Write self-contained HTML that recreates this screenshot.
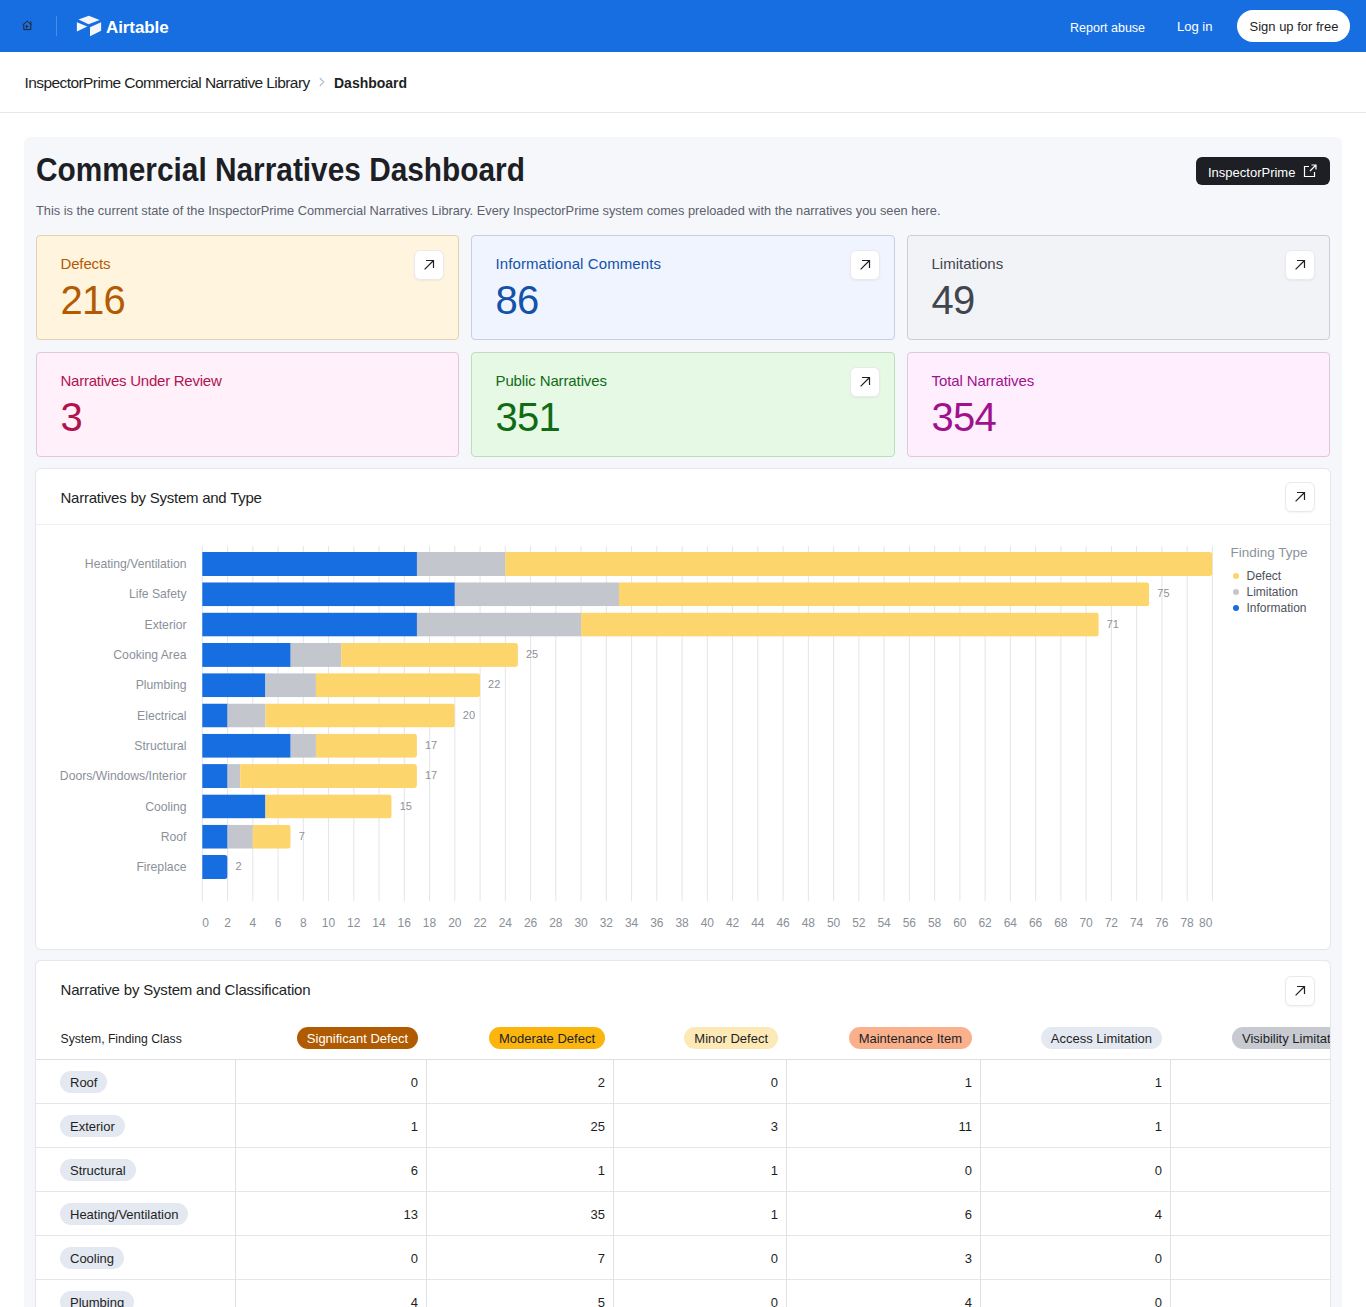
<!DOCTYPE html>
<html><head><meta charset="utf-8"><title>Commercial Narratives Dashboard</title>
<style>
html,body{margin:0;padding:0;background:#fff;overflow:hidden;width:1366px;height:1307px;font-family:'Liberation Sans', sans-serif}
.t{position:absolute;white-space:nowrap;font-family:'Liberation Sans', sans-serif}
.pill{position:absolute;height:21px;line-height:22px;padding:1px 10px 0 10px;border-radius:11px;font-size:13px;white-space:nowrap;font-family:'Liberation Sans', sans-serif}
</style></head><body>
<div style="position:absolute;left:0px;top:0px;width:1366px;height:52px;background:#176ee1"></div>
<svg style="position:absolute;left:22px;top:20px" width="11" height="11" viewBox="0 0 11 11"><path d="M0.8 4.8 L5.2 1.2 L9.6 4.8 M1.8 4.2 V9.6 H8.8 V4.2" fill="none" stroke="#2a2018" stroke-width="0.95"/><path d="M8.8 1.6 V4" stroke="#2a2018" stroke-width="1.1"/><path d="M4.4 5 V8.2 M4.4 6.6 L6.2 6.6" fill="none" stroke="#2a2018" stroke-width="1"/></svg>
<div style="position:absolute;left:56px;top:16px;width:1px;height:20px;background:rgba(255,255,255,0.22)"></div>
<svg style="position:absolute;left:70px;top:10px" width="34" height="30" viewBox="0 0 34 30"><path d="M8.5 9.6 L18.8 5.8 L29.6 10 L18.5 14.2 Z" fill="#f4f6fb"/><path d="M6.9 12.3 L17.3 16.5 L6.9 21.5 Z" fill="#f4f6fb"/><path d="M20 17.3 L31.1 12.3 L31.1 20.8 L20 26.2 Z" fill="#f4f6fb"/></svg>
<div class="t" style="left:106px;top:18.61px;font-size:17px;line-height:17px;color:#ffffff;font-weight:bold;letter-spacing:-0.1px">Airtable</div>
<div class="t" style="left:1070px;top:22.42px;font-size:12.5px;line-height:12.5px;color:#ffffff;font-weight:normal;">Report abuse</div>
<div class="t" style="left:1177px;top:19.50px;font-size:13px;line-height:13px;color:#ffffff;font-weight:normal;">Log in</div>
<div style="position:absolute;left:1237px;top:10px;width:113px;height:32px;background:#fff;border-radius:16px"></div>
<div class="t" style="left:1249.5px;top:19.50px;font-size:13px;line-height:13px;color:#1d1f25;font-weight:normal;">Sign up for free</div>
<div class="t" style="left:24.5px;top:74.88px;font-size:15.5px;line-height:15.5px;color:#1d1f25;font-weight:normal;letter-spacing:-0.58px">InspectorPrime Commercial Narrative Library</div>
<svg style="position:absolute;left:318px;top:76px" width="8" height="12" viewBox="0 0 8 12"><path d="M1.8 2 L5.8 6 L1.8 10" fill="none" stroke="#b8bcc8" stroke-width="1.1"/></svg>
<div class="t" style="left:334px;top:76.15px;font-size:14px;line-height:14px;color:#1d1f25;font-weight:bold;">Dashboard</div>
<div style="position:absolute;left:0px;top:112px;width:1366px;height:1px;background:#e6e6e8"></div>
<div style="position:absolute;left:24px;top:137px;width:1318px;height:1400px;background:#f6f7fb;border-radius:6px"></div>
<div class="t" style="left:36px;top:152.22px;font-size:34px;line-height:34px;color:#1d1f25;font-weight:bold;transform:scaleX(0.877);transform-origin:0 0">Commercial Narratives Dashboard</div>
<div class="t" style="left:36px;top:204.66px;font-size:12.8px;line-height:12.8px;color:#5c616b;font-weight:normal;">This is the current state of the InspectorPrime Commercial Narratives Library. Every InspectorPrime system comes preloaded with the narratives you seen here.</div>
<div style="position:absolute;left:1196px;top:157px;width:134px;height:28px;background:#1d1f25;border-radius:6px"></div>
<div class="t" style="left:1208px;top:166.00px;font-size:13px;line-height:13px;color:#ffffff;font-weight:normal;">InspectorPrime</div>
<svg style="position:absolute;left:1302px;top:163px" width="16" height="16" viewBox="0 0 16 16"><path d="M7 3.5 H2.5 V13.5 H12.5 V9" fill="none" stroke="#fff" stroke-width="1.2"/><path d="M8 8 L14 2 M9.5 2 H14 V6.5" fill="none" stroke="#fff" stroke-width="1.2"/></svg>
<div style="position:absolute;left:36px;top:235px;width:421px;height:103px;background:#fff4de;border:1px solid #e2d1b1;border-radius:4px"></div>
<div class="t" style="left:60.5px;top:256.30px;font-size:15px;line-height:15px;color:#b35a02;font-weight:normal;letter-spacing:-0.15px">Defects</div>
<div class="t" style="left:60.5px;top:280.14px;font-size:40px;line-height:40px;color:#b35a02;font-weight:normal;letter-spacing:-0.7px">216</div>
<div style="position:absolute;left:414px;top:250px;width:28px;height:28px;background:#fff;border:1px solid #e8eaef;border-radius:6px;box-shadow:0 1px 2px rgba(0,0,0,0.05)"></div>
<svg style="position:absolute;left:422.0px;top:258.0px" width="14" height="14" viewBox="0 0 14 14"><path d="M2.6 11.4 L11 3 M4 2.5 H11.5 V10" fill="none" stroke="#1d1f25" stroke-width="1.2"/></svg>
<div style="position:absolute;left:471px;top:235px;width:422px;height:103px;background:#f0f4fe;border:1px solid #c8cee3;border-radius:4px"></div>
<div class="t" style="left:495.5px;top:256.30px;font-size:15px;line-height:15px;color:#1252a8;font-weight:normal;letter-spacing:0.1px">Informational Comments</div>
<div class="t" style="left:495.5px;top:280.14px;font-size:40px;line-height:40px;color:#1252a8;font-weight:normal;letter-spacing:-0.7px">86</div>
<div style="position:absolute;left:850px;top:250px;width:28px;height:28px;background:#fff;border:1px solid #e8eaef;border-radius:6px;box-shadow:0 1px 2px rgba(0,0,0,0.05)"></div>
<svg style="position:absolute;left:858.0px;top:258.0px" width="14" height="14" viewBox="0 0 14 14"><path d="M2.6 11.4 L11 3 M4 2.5 H11.5 V10" fill="none" stroke="#1d1f25" stroke-width="1.2"/></svg>
<div style="position:absolute;left:907px;top:235px;width:421px;height:103px;background:#f2f3f7;border:1px solid #cbced4;border-radius:4px"></div>
<div class="t" style="left:931.5px;top:256.30px;font-size:15px;line-height:15px;color:#41454d;font-weight:normal;letter-spacing:0px">Limitations</div>
<div class="t" style="left:931.5px;top:280.14px;font-size:40px;line-height:40px;color:#41454d;font-weight:normal;letter-spacing:-0.7px">49</div>
<div style="position:absolute;left:1285px;top:250px;width:28px;height:28px;background:#fff;border:1px solid #e8eaef;border-radius:6px;box-shadow:0 1px 2px rgba(0,0,0,0.05)"></div>
<svg style="position:absolute;left:1293.0px;top:258.0px" width="14" height="14" viewBox="0 0 14 14"><path d="M2.6 11.4 L11 3 M4 2.5 H11.5 V10" fill="none" stroke="#1d1f25" stroke-width="1.2"/></svg>
<div style="position:absolute;left:36px;top:352px;width:421px;height:103px;background:#fff0fa;border:1px solid #e3c6dc;border-radius:4px"></div>
<div class="t" style="left:60.5px;top:373.30px;font-size:15px;line-height:15px;color:#b0144f;font-weight:normal;letter-spacing:-0.25px">Narratives Under Review</div>
<div class="t" style="left:60.5px;top:397.14px;font-size:40px;line-height:40px;color:#b0144f;font-weight:normal;letter-spacing:-0.7px">3</div>
<div style="position:absolute;left:471px;top:352px;width:422px;height:103px;background:#e5f9e5;border:1px solid #bfdcbf;border-radius:4px"></div>
<div class="t" style="left:495.5px;top:373.30px;font-size:15px;line-height:15px;color:#116b15;font-weight:normal;letter-spacing:-0.12px">Public Narratives</div>
<div class="t" style="left:495.5px;top:397.14px;font-size:40px;line-height:40px;color:#116b15;font-weight:normal;letter-spacing:-0.7px">351</div>
<div style="position:absolute;left:850px;top:367px;width:28px;height:28px;background:#fff;border:1px solid #e8eaef;border-radius:6px;box-shadow:0 1px 2px rgba(0,0,0,0.05)"></div>
<svg style="position:absolute;left:858.0px;top:375.0px" width="14" height="14" viewBox="0 0 14 14"><path d="M2.6 11.4 L11 3 M4 2.5 H11.5 V10" fill="none" stroke="#1d1f25" stroke-width="1.2"/></svg>
<div style="position:absolute;left:907px;top:352px;width:421px;height:103px;background:#ffeffe;border:1px solid #e1c6e0;border-radius:4px"></div>
<div class="t" style="left:931.5px;top:373.30px;font-size:15px;line-height:15px;color:#a0128c;font-weight:normal;letter-spacing:-0.1px">Total Narratives</div>
<div class="t" style="left:931.5px;top:397.14px;font-size:40px;line-height:40px;color:#a0128c;font-weight:normal;letter-spacing:-0.7px">354</div>
<div style="position:absolute;left:35px;top:468px;width:1294px;height:480px;background:#fff;border:1px solid #e6e7eb;border-radius:6px;box-shadow:0 0 1px rgba(0,0,0,0.05)"></div>
<div class="t" style="left:60.5px;top:490.30px;font-size:15px;line-height:15px;color:#1d1f25;font-weight:normal;letter-spacing:-0.24px">Narratives by System and Type</div>
<div style="position:absolute;left:36px;top:524px;width:1294px;height:1px;background:#eeeff2"></div>
<div style="position:absolute;left:1285px;top:482px;width:28px;height:28px;background:#fff;border:1px solid #e8eaef;border-radius:6px;box-shadow:0 1px 2px rgba(0,0,0,0.05)"></div>
<svg style="position:absolute;left:1293.0px;top:490.0px" width="14" height="14" viewBox="0 0 14 14"><path d="M2.6 11.4 L11 3 M4 2.5 H11.5 V10" fill="none" stroke="#1d1f25" stroke-width="1.2"/></svg>
<svg style="position:absolute;left:0;top:0" width="1366" height="1000"><line x1="202.30" y1="546" x2="202.30" y2="901" stroke="#e4e5e8" stroke-width="1"/><line x1="227.55" y1="546" x2="227.55" y2="901" stroke="#e4e5e8" stroke-width="1"/><line x1="252.81" y1="546" x2="252.81" y2="901" stroke="#e4e5e8" stroke-width="1"/><line x1="278.06" y1="546" x2="278.06" y2="901" stroke="#e4e5e8" stroke-width="1"/><line x1="303.31" y1="546" x2="303.31" y2="901" stroke="#e4e5e8" stroke-width="1"/><line x1="328.56" y1="546" x2="328.56" y2="901" stroke="#e4e5e8" stroke-width="1"/><line x1="353.82" y1="546" x2="353.82" y2="901" stroke="#e4e5e8" stroke-width="1"/><line x1="379.07" y1="546" x2="379.07" y2="901" stroke="#e4e5e8" stroke-width="1"/><line x1="404.32" y1="546" x2="404.32" y2="901" stroke="#e4e5e8" stroke-width="1"/><line x1="429.57" y1="546" x2="429.57" y2="901" stroke="#e4e5e8" stroke-width="1"/><line x1="454.83" y1="546" x2="454.83" y2="901" stroke="#e4e5e8" stroke-width="1"/><line x1="480.08" y1="546" x2="480.08" y2="901" stroke="#e4e5e8" stroke-width="1"/><line x1="505.33" y1="546" x2="505.33" y2="901" stroke="#e4e5e8" stroke-width="1"/><line x1="530.58" y1="546" x2="530.58" y2="901" stroke="#e4e5e8" stroke-width="1"/><line x1="555.84" y1="546" x2="555.84" y2="901" stroke="#e4e5e8" stroke-width="1"/><line x1="581.09" y1="546" x2="581.09" y2="901" stroke="#e4e5e8" stroke-width="1"/><line x1="606.34" y1="546" x2="606.34" y2="901" stroke="#e4e5e8" stroke-width="1"/><line x1="631.59" y1="546" x2="631.59" y2="901" stroke="#e4e5e8" stroke-width="1"/><line x1="656.85" y1="546" x2="656.85" y2="901" stroke="#e4e5e8" stroke-width="1"/><line x1="682.10" y1="546" x2="682.10" y2="901" stroke="#e4e5e8" stroke-width="1"/><line x1="707.35" y1="546" x2="707.35" y2="901" stroke="#e4e5e8" stroke-width="1"/><line x1="732.60" y1="546" x2="732.60" y2="901" stroke="#e4e5e8" stroke-width="1"/><line x1="757.86" y1="546" x2="757.86" y2="901" stroke="#e4e5e8" stroke-width="1"/><line x1="783.11" y1="546" x2="783.11" y2="901" stroke="#e4e5e8" stroke-width="1"/><line x1="808.36" y1="546" x2="808.36" y2="901" stroke="#e4e5e8" stroke-width="1"/><line x1="833.61" y1="546" x2="833.61" y2="901" stroke="#e4e5e8" stroke-width="1"/><line x1="858.87" y1="546" x2="858.87" y2="901" stroke="#e4e5e8" stroke-width="1"/><line x1="884.12" y1="546" x2="884.12" y2="901" stroke="#e4e5e8" stroke-width="1"/><line x1="909.37" y1="546" x2="909.37" y2="901" stroke="#e4e5e8" stroke-width="1"/><line x1="934.62" y1="546" x2="934.62" y2="901" stroke="#e4e5e8" stroke-width="1"/><line x1="959.88" y1="546" x2="959.88" y2="901" stroke="#e4e5e8" stroke-width="1"/><line x1="985.13" y1="546" x2="985.13" y2="901" stroke="#e4e5e8" stroke-width="1"/><line x1="1010.38" y1="546" x2="1010.38" y2="901" stroke="#e4e5e8" stroke-width="1"/><line x1="1035.63" y1="546" x2="1035.63" y2="901" stroke="#e4e5e8" stroke-width="1"/><line x1="1060.89" y1="546" x2="1060.89" y2="901" stroke="#e4e5e8" stroke-width="1"/><line x1="1086.14" y1="546" x2="1086.14" y2="901" stroke="#e4e5e8" stroke-width="1"/><line x1="1111.39" y1="546" x2="1111.39" y2="901" stroke="#e4e5e8" stroke-width="1"/><line x1="1136.64" y1="546" x2="1136.64" y2="901" stroke="#e4e5e8" stroke-width="1"/><line x1="1161.90" y1="546" x2="1161.90" y2="901" stroke="#e4e5e8" stroke-width="1"/><line x1="1187.15" y1="546" x2="1187.15" y2="901" stroke="#e4e5e8" stroke-width="1"/><line x1="1212.40" y1="546" x2="1212.40" y2="901" stroke="#e4e5e8" stroke-width="1"/><clipPath id="c0"><rect x="198.30" y="552.00" width="1014.10" height="24" rx="3"/></clipPath><g clip-path="url(#c0)"><rect x="202.30" y="552.00" width="214.65" height="24" fill="#176ee1"/><rect x="416.95" y="552.00" width="88.38" height="24" fill="#c4c6cd"/><rect x="505.33" y="552.00" width="707.07" height="24" fill="#fdd56d"/></g><clipPath id="c1"><rect x="198.30" y="582.30" width="950.97" height="24" rx="3"/></clipPath><g clip-path="url(#c1)"><rect x="202.30" y="582.30" width="252.53" height="24" fill="#176ee1"/><rect x="454.83" y="582.30" width="164.14" height="24" fill="#c4c6cd"/><rect x="618.97" y="582.30" width="530.30" height="24" fill="#fdd56d"/></g><clipPath id="c2"><rect x="198.30" y="612.60" width="900.46" height="24" rx="3"/></clipPath><g clip-path="url(#c2)"><rect x="202.30" y="612.60" width="214.65" height="24" fill="#176ee1"/><rect x="416.95" y="612.60" width="164.14" height="24" fill="#c4c6cd"/><rect x="581.09" y="612.60" width="517.68" height="24" fill="#fdd56d"/></g><clipPath id="c3"><rect x="198.30" y="642.90" width="319.66" height="24" rx="3"/></clipPath><g clip-path="url(#c3)"><rect x="202.30" y="642.90" width="88.38" height="24" fill="#176ee1"/><rect x="290.68" y="642.90" width="50.50" height="24" fill="#c4c6cd"/><rect x="341.19" y="642.90" width="176.77" height="24" fill="#fdd56d"/></g><clipPath id="c4"><rect x="198.30" y="673.20" width="281.78" height="24" rx="3"/></clipPath><g clip-path="url(#c4)"><rect x="202.30" y="673.20" width="63.13" height="24" fill="#176ee1"/><rect x="265.43" y="673.20" width="50.50" height="24" fill="#c4c6cd"/><rect x="315.94" y="673.20" width="164.14" height="24" fill="#fdd56d"/></g><clipPath id="c5"><rect x="198.30" y="703.50" width="256.53" height="24" rx="3"/></clipPath><g clip-path="url(#c5)"><rect x="202.30" y="703.50" width="25.25" height="24" fill="#176ee1"/><rect x="227.55" y="703.50" width="37.88" height="24" fill="#c4c6cd"/><rect x="265.43" y="703.50" width="189.39" height="24" fill="#fdd56d"/></g><clipPath id="c6"><rect x="198.30" y="733.80" width="218.65" height="24" rx="3"/></clipPath><g clip-path="url(#c6)"><rect x="202.30" y="733.80" width="88.38" height="24" fill="#176ee1"/><rect x="290.68" y="733.80" width="25.25" height="24" fill="#c4c6cd"/><rect x="315.94" y="733.80" width="101.01" height="24" fill="#fdd56d"/></g><clipPath id="c7"><rect x="198.30" y="764.10" width="218.65" height="24" rx="3"/></clipPath><g clip-path="url(#c7)"><rect x="202.30" y="764.10" width="25.25" height="24" fill="#176ee1"/><rect x="227.55" y="764.10" width="12.63" height="24" fill="#c4c6cd"/><rect x="240.18" y="764.10" width="176.77" height="24" fill="#fdd56d"/></g><clipPath id="c8"><rect x="198.30" y="794.40" width="193.39" height="24" rx="3"/></clipPath><g clip-path="url(#c8)"><rect x="202.30" y="794.40" width="63.13" height="24" fill="#176ee1"/><rect x="265.43" y="794.40" width="126.26" height="24" fill="#fdd56d"/></g><clipPath id="c9"><rect x="198.30" y="824.70" width="92.38" height="24" rx="3"/></clipPath><g clip-path="url(#c9)"><rect x="202.30" y="824.70" width="25.25" height="24" fill="#176ee1"/><rect x="227.55" y="824.70" width="25.25" height="24" fill="#c4c6cd"/><rect x="252.81" y="824.70" width="37.88" height="24" fill="#fdd56d"/></g><clipPath id="c10"><rect x="198.30" y="855.00" width="29.25" height="24" rx="3"/></clipPath><g clip-path="url(#c10)"><rect x="202.30" y="855.00" width="25.25" height="24" fill="#176ee1"/></g></svg>
<div class="t" style="right:1179.5px;top:558.17px;font-size:12.2px;line-height:12.2px;color:#8b9099;font-weight:normal;">Heating/Ventilation</div>
<div class="t" style="right:1179.5px;top:588.47px;font-size:12.2px;line-height:12.2px;color:#8b9099;font-weight:normal;">Life Safety</div>
<div class="t" style="left:1157.2687500000002px;top:588.49px;font-size:11px;line-height:11px;color:#8d9199;font-weight:normal;">75</div>
<div class="t" style="right:1179.5px;top:618.77px;font-size:12.2px;line-height:12.2px;color:#8b9099;font-weight:normal;">Exterior</div>
<div class="t" style="left:1106.76375px;top:618.79px;font-size:11px;line-height:11px;color:#8d9199;font-weight:normal;">71</div>
<div class="t" style="right:1179.5px;top:649.07px;font-size:12.2px;line-height:12.2px;color:#8b9099;font-weight:normal;">Cooking Area</div>
<div class="t" style="left:525.9562500000001px;top:649.09px;font-size:11px;line-height:11px;color:#8d9199;font-weight:normal;">25</div>
<div class="t" style="right:1179.5px;top:679.37px;font-size:12.2px;line-height:12.2px;color:#8b9099;font-weight:normal;">Plumbing</div>
<div class="t" style="left:488.07750000000004px;top:679.39px;font-size:11px;line-height:11px;color:#8d9199;font-weight:normal;">22</div>
<div class="t" style="right:1179.5px;top:709.67px;font-size:12.2px;line-height:12.2px;color:#8b9099;font-weight:normal;">Electrical</div>
<div class="t" style="left:462.82500000000005px;top:709.69px;font-size:11px;line-height:11px;color:#8d9199;font-weight:normal;">20</div>
<div class="t" style="right:1179.5px;top:739.97px;font-size:12.2px;line-height:12.2px;color:#8b9099;font-weight:normal;">Structural</div>
<div class="t" style="left:424.9462500000001px;top:739.99px;font-size:11px;line-height:11px;color:#8d9199;font-weight:normal;">17</div>
<div class="t" style="right:1179.5px;top:770.27px;font-size:12.2px;line-height:12.2px;color:#8b9099;font-weight:normal;">Doors/Windows/Interior</div>
<div class="t" style="left:424.9462500000001px;top:770.29px;font-size:11px;line-height:11px;color:#8d9199;font-weight:normal;">17</div>
<div class="t" style="right:1179.5px;top:800.57px;font-size:12.2px;line-height:12.2px;color:#8b9099;font-weight:normal;">Cooling</div>
<div class="t" style="left:399.69375px;top:800.59px;font-size:11px;line-height:11px;color:#8d9199;font-weight:normal;">15</div>
<div class="t" style="right:1179.5px;top:830.87px;font-size:12.2px;line-height:12.2px;color:#8b9099;font-weight:normal;">Roof</div>
<div class="t" style="left:298.68375000000003px;top:830.89px;font-size:11px;line-height:11px;color:#8d9199;font-weight:normal;">7</div>
<div class="t" style="right:1179.5px;top:861.17px;font-size:12.2px;line-height:12.2px;color:#8b9099;font-weight:normal;">Fireplace</div>
<div class="t" style="left:235.5525px;top:861.19px;font-size:11px;line-height:11px;color:#8d9199;font-weight:normal;">2</div>
<div class="t" style="left:202.3px;top:916.84px;font-size:12px;line-height:12px;color:#8a8f98;font-weight:normal;">0</div>
<div class="t" style="left:224.2px;top:916.84px;font-size:12px;line-height:12px;color:#8a8f98;font-weight:normal;">2</div>
<div class="t" style="left:249.46px;top:916.84px;font-size:12px;line-height:12px;color:#8a8f98;font-weight:normal;">4</div>
<div class="t" style="left:274.71px;top:916.84px;font-size:12px;line-height:12px;color:#8a8f98;font-weight:normal;">6</div>
<div class="t" style="left:299.96px;top:916.84px;font-size:12px;line-height:12px;color:#8a8f98;font-weight:normal;">8</div>
<div class="t" style="left:321.86px;top:916.84px;font-size:12px;line-height:12px;color:#8a8f98;font-weight:normal;">10</div>
<div class="t" style="left:347.12px;top:916.84px;font-size:12px;line-height:12px;color:#8a8f98;font-weight:normal;">12</div>
<div class="t" style="left:372.37px;top:916.84px;font-size:12px;line-height:12px;color:#8a8f98;font-weight:normal;">14</div>
<div class="t" style="left:397.62px;top:916.84px;font-size:12px;line-height:12px;color:#8a8f98;font-weight:normal;">16</div>
<div class="t" style="left:422.87px;top:916.84px;font-size:12px;line-height:12px;color:#8a8f98;font-weight:normal;">18</div>
<div class="t" style="left:448.13px;top:916.84px;font-size:12px;line-height:12px;color:#8a8f98;font-weight:normal;">20</div>
<div class="t" style="left:473.38px;top:916.84px;font-size:12px;line-height:12px;color:#8a8f98;font-weight:normal;">22</div>
<div class="t" style="left:498.63px;top:916.84px;font-size:12px;line-height:12px;color:#8a8f98;font-weight:normal;">24</div>
<div class="t" style="left:523.88px;top:916.84px;font-size:12px;line-height:12px;color:#8a8f98;font-weight:normal;">26</div>
<div class="t" style="left:549.13px;top:916.84px;font-size:12px;line-height:12px;color:#8a8f98;font-weight:normal;">28</div>
<div class="t" style="left:574.39px;top:916.84px;font-size:12px;line-height:12px;color:#8a8f98;font-weight:normal;">30</div>
<div class="t" style="left:599.64px;top:916.84px;font-size:12px;line-height:12px;color:#8a8f98;font-weight:normal;">32</div>
<div class="t" style="left:624.89px;top:916.84px;font-size:12px;line-height:12px;color:#8a8f98;font-weight:normal;">34</div>
<div class="t" style="left:650.14px;top:916.84px;font-size:12px;line-height:12px;color:#8a8f98;font-weight:normal;">36</div>
<div class="t" style="left:675.4px;top:916.84px;font-size:12px;line-height:12px;color:#8a8f98;font-weight:normal;">38</div>
<div class="t" style="left:700.65px;top:916.84px;font-size:12px;line-height:12px;color:#8a8f98;font-weight:normal;">40</div>
<div class="t" style="left:725.9px;top:916.84px;font-size:12px;line-height:12px;color:#8a8f98;font-weight:normal;">42</div>
<div class="t" style="left:751.15px;top:916.84px;font-size:12px;line-height:12px;color:#8a8f98;font-weight:normal;">44</div>
<div class="t" style="left:776.41px;top:916.84px;font-size:12px;line-height:12px;color:#8a8f98;font-weight:normal;">46</div>
<div class="t" style="left:801.66px;top:916.84px;font-size:12px;line-height:12px;color:#8a8f98;font-weight:normal;">48</div>
<div class="t" style="left:826.91px;top:916.84px;font-size:12px;line-height:12px;color:#8a8f98;font-weight:normal;">50</div>
<div class="t" style="left:852.17px;top:916.84px;font-size:12px;line-height:12px;color:#8a8f98;font-weight:normal;">52</div>
<div class="t" style="left:877.42px;top:916.84px;font-size:12px;line-height:12px;color:#8a8f98;font-weight:normal;">54</div>
<div class="t" style="left:902.67px;top:916.84px;font-size:12px;line-height:12px;color:#8a8f98;font-weight:normal;">56</div>
<div class="t" style="left:927.92px;top:916.84px;font-size:12px;line-height:12px;color:#8a8f98;font-weight:normal;">58</div>
<div class="t" style="left:953.18px;top:916.84px;font-size:12px;line-height:12px;color:#8a8f98;font-weight:normal;">60</div>
<div class="t" style="left:978.43px;top:916.84px;font-size:12px;line-height:12px;color:#8a8f98;font-weight:normal;">62</div>
<div class="t" style="left:1003.68px;top:916.84px;font-size:12px;line-height:12px;color:#8a8f98;font-weight:normal;">64</div>
<div class="t" style="left:1028.93px;top:916.84px;font-size:12px;line-height:12px;color:#8a8f98;font-weight:normal;">66</div>
<div class="t" style="left:1054.19px;top:916.84px;font-size:12px;line-height:12px;color:#8a8f98;font-weight:normal;">68</div>
<div class="t" style="left:1079.44px;top:916.84px;font-size:12px;line-height:12px;color:#8a8f98;font-weight:normal;">70</div>
<div class="t" style="left:1104.69px;top:916.84px;font-size:12px;line-height:12px;color:#8a8f98;font-weight:normal;">72</div>
<div class="t" style="left:1129.94px;top:916.84px;font-size:12px;line-height:12px;color:#8a8f98;font-weight:normal;">74</div>
<div class="t" style="left:1155.2px;top:916.84px;font-size:12px;line-height:12px;color:#8a8f98;font-weight:normal;">76</div>
<div class="t" style="left:1180.45px;top:916.84px;font-size:12px;line-height:12px;color:#8a8f98;font-weight:normal;">78</div>
<div class="t" style="left:1199.0px;top:916.84px;font-size:12px;line-height:12px;color:#8a8f98;font-weight:normal;">80</div>
<div class="t" style="left:1230.5px;top:546.07px;font-size:13.5px;line-height:13.5px;color:#8d929b;font-weight:normal;">Finding Type</div>
<div style="position:absolute;left:1233px;top:573px;width:6px;height:6px;background:#fdd56d;border-radius:50%"></div>
<div class="t" style="left:1246.5px;top:570.34px;font-size:12px;line-height:12px;color:#4d525b;font-weight:normal;">Defect</div>
<div style="position:absolute;left:1233px;top:589px;width:6px;height:6px;background:#c4c6cd;border-radius:50%"></div>
<div class="t" style="left:1246.5px;top:586.34px;font-size:12px;line-height:12px;color:#4d525b;font-weight:normal;">Limitation</div>
<div style="position:absolute;left:1233px;top:605px;width:6px;height:6px;background:#176ee1;border-radius:50%"></div>
<div class="t" style="left:1246.5px;top:602.34px;font-size:12px;line-height:12px;color:#4d525b;font-weight:normal;">Information</div>
<div style="position:absolute;left:33px;top:958px;width:1300px;height:400px;overflow:hidden">
<div style="position:absolute;left:2px;top:2px;width:1294px;height:398px;background:#fff;border:1px solid #e6e7eb;border-radius:6px;box-shadow:0 0 1px rgba(0,0,0,0.05)"></div>
</div>
<div class="t" style="left:60.5px;top:982.30px;font-size:15px;line-height:15px;color:#1d1f25;font-weight:normal;letter-spacing:-0.18px">Narrative by System and Classification</div>
<div style="position:absolute;left:1285px;top:976px;width:28px;height:28px;background:#fff;border:1px solid #e8eaef;border-radius:6px;box-shadow:0 1px 2px rgba(0,0,0,0.05)"></div>
<svg style="position:absolute;left:1293.0px;top:984.0px" width="14" height="14" viewBox="0 0 14 14"><path d="M2.6 11.4 L11 3 M4 2.5 H11.5 V10" fill="none" stroke="#1d1f25" stroke-width="1.2"/></svg>
<div class="t" style="left:60.5px;top:1032.67px;font-size:12.2px;line-height:12.2px;color:#1d1f25;font-weight:normal;">System, Finding Class</div>
<div style="position:absolute;left:36px;top:1059px;width:1294px;height:1px;background:#dedfe3"></div>
<div style="position:absolute;left:36px;top:1000px;width:1294px;height:400px;overflow:hidden">
<div class="pill" style="right:912px;top:27px;background:#b05b02;color:#ffffff">Significant Defect</div>
<div class="pill" style="right:725px;top:27px;background:#fbb50d;color:#1d1f25">Moderate Defect</div>
<div class="pill" style="right:552px;top:27px;background:#fde9b6;color:#1d1f25">Minor Defect</div>
<div class="pill" style="right:358px;top:27px;background:#f9b08b;color:#1d1f25">Maintenance Item</div>
<div class="pill" style="right:168px;top:27px;background:#e4e8f0;color:#1d1f25">Access Limitation</div>
<div class="pill" style="left:1196px;top:27px;background:#c7cad0;color:#1d1f25">Visibility Limitation</div>
</div>
<div style="position:absolute;left:36px;top:1103px;width:1294px;height:1px;background:#e4e5e8"></div>
<div class="pill" style="left:60px;top:1071px;background:#e4e8f0;color:#1d1f25">Roof</div>
<div class="t" style="right:948px;top:1076.00px;font-size:13px;line-height:13px;color:#1d1f25;font-weight:normal;">0</div>
<div class="t" style="right:761px;top:1076.00px;font-size:13px;line-height:13px;color:#1d1f25;font-weight:normal;">2</div>
<div class="t" style="right:588px;top:1076.00px;font-size:13px;line-height:13px;color:#1d1f25;font-weight:normal;">0</div>
<div class="t" style="right:394px;top:1076.00px;font-size:13px;line-height:13px;color:#1d1f25;font-weight:normal;">1</div>
<div class="t" style="right:204px;top:1076.00px;font-size:13px;line-height:13px;color:#1d1f25;font-weight:normal;">1</div>
<div style="position:absolute;left:36px;top:1147px;width:1294px;height:1px;background:#e4e5e8"></div>
<div class="pill" style="left:60px;top:1115px;background:#e4e8f0;color:#1d1f25">Exterior</div>
<div class="t" style="right:948px;top:1120.00px;font-size:13px;line-height:13px;color:#1d1f25;font-weight:normal;">1</div>
<div class="t" style="right:761px;top:1120.00px;font-size:13px;line-height:13px;color:#1d1f25;font-weight:normal;">25</div>
<div class="t" style="right:588px;top:1120.00px;font-size:13px;line-height:13px;color:#1d1f25;font-weight:normal;">3</div>
<div class="t" style="right:394px;top:1120.00px;font-size:13px;line-height:13px;color:#1d1f25;font-weight:normal;">11</div>
<div class="t" style="right:204px;top:1120.00px;font-size:13px;line-height:13px;color:#1d1f25;font-weight:normal;">1</div>
<div style="position:absolute;left:36px;top:1191px;width:1294px;height:1px;background:#e4e5e8"></div>
<div class="pill" style="left:60px;top:1159px;background:#e4e8f0;color:#1d1f25">Structural</div>
<div class="t" style="right:948px;top:1164.00px;font-size:13px;line-height:13px;color:#1d1f25;font-weight:normal;">6</div>
<div class="t" style="right:761px;top:1164.00px;font-size:13px;line-height:13px;color:#1d1f25;font-weight:normal;">1</div>
<div class="t" style="right:588px;top:1164.00px;font-size:13px;line-height:13px;color:#1d1f25;font-weight:normal;">1</div>
<div class="t" style="right:394px;top:1164.00px;font-size:13px;line-height:13px;color:#1d1f25;font-weight:normal;">0</div>
<div class="t" style="right:204px;top:1164.00px;font-size:13px;line-height:13px;color:#1d1f25;font-weight:normal;">0</div>
<div style="position:absolute;left:36px;top:1235px;width:1294px;height:1px;background:#e4e5e8"></div>
<div class="pill" style="left:60px;top:1203px;background:#e4e8f0;color:#1d1f25">Heating/Ventilation</div>
<div class="t" style="right:948px;top:1208.00px;font-size:13px;line-height:13px;color:#1d1f25;font-weight:normal;">13</div>
<div class="t" style="right:761px;top:1208.00px;font-size:13px;line-height:13px;color:#1d1f25;font-weight:normal;">35</div>
<div class="t" style="right:588px;top:1208.00px;font-size:13px;line-height:13px;color:#1d1f25;font-weight:normal;">1</div>
<div class="t" style="right:394px;top:1208.00px;font-size:13px;line-height:13px;color:#1d1f25;font-weight:normal;">6</div>
<div class="t" style="right:204px;top:1208.00px;font-size:13px;line-height:13px;color:#1d1f25;font-weight:normal;">4</div>
<div style="position:absolute;left:36px;top:1279px;width:1294px;height:1px;background:#e4e5e8"></div>
<div class="pill" style="left:60px;top:1247px;background:#e4e8f0;color:#1d1f25">Cooling</div>
<div class="t" style="right:948px;top:1252.00px;font-size:13px;line-height:13px;color:#1d1f25;font-weight:normal;">0</div>
<div class="t" style="right:761px;top:1252.00px;font-size:13px;line-height:13px;color:#1d1f25;font-weight:normal;">7</div>
<div class="t" style="right:588px;top:1252.00px;font-size:13px;line-height:13px;color:#1d1f25;font-weight:normal;">0</div>
<div class="t" style="right:394px;top:1252.00px;font-size:13px;line-height:13px;color:#1d1f25;font-weight:normal;">3</div>
<div class="t" style="right:204px;top:1252.00px;font-size:13px;line-height:13px;color:#1d1f25;font-weight:normal;">0</div>
<div style="position:absolute;left:36px;top:1323px;width:1294px;height:1px;background:#e4e5e8"></div>
<div class="pill" style="left:60px;top:1291px;background:#e4e8f0;color:#1d1f25">Plumbing</div>
<div class="t" style="right:948px;top:1296.00px;font-size:13px;line-height:13px;color:#1d1f25;font-weight:normal;">4</div>
<div class="t" style="right:761px;top:1296.00px;font-size:13px;line-height:13px;color:#1d1f25;font-weight:normal;">5</div>
<div class="t" style="right:588px;top:1296.00px;font-size:13px;line-height:13px;color:#1d1f25;font-weight:normal;">0</div>
<div class="t" style="right:394px;top:1296.00px;font-size:13px;line-height:13px;color:#1d1f25;font-weight:normal;">4</div>
<div class="t" style="right:204px;top:1296.00px;font-size:13px;line-height:13px;color:#1d1f25;font-weight:normal;">0</div>
<div style="position:absolute;left:235px;top:1060px;width:1px;height:300px;background:#e0e1e5"></div>
<div style="position:absolute;left:426px;top:1060px;width:1px;height:300px;background:#e0e1e5"></div>
<div style="position:absolute;left:613px;top:1060px;width:1px;height:300px;background:#e0e1e5"></div>
<div style="position:absolute;left:786px;top:1060px;width:1px;height:300px;background:#e0e1e5"></div>
<div style="position:absolute;left:980px;top:1060px;width:1px;height:300px;background:#e0e1e5"></div>
<div style="position:absolute;left:1170px;top:1060px;width:1px;height:300px;background:#e0e1e5"></div>
</body></html>
